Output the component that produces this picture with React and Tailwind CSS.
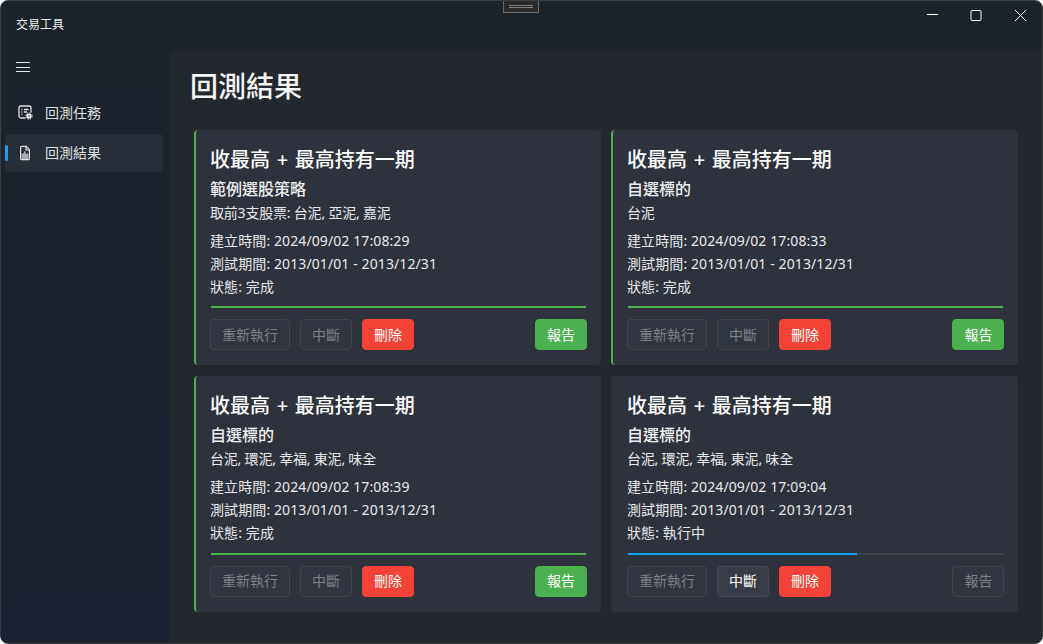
import { useState } from 'react';

const FONT = "font-['Noto_Sans','Noto_Sans_CJK_TC',sans-serif]";

const TASKS = [
  { stock: '範例選股策略', list: '取前3支股票: 台泥, 亞泥, 嘉泥', created: '2024/09/02 17:08:29', status: '完成', done: true },
  { stock: '自選標的', list: '台泥', created: '2024/09/02 17:08:33', status: '完成', done: true },
  { stock: '自選標的', list: '台泥, 環泥, 幸福, 東泥, 味全', created: '2024/09/02 17:08:39', status: '完成', done: true },
  { stock: '自選標的', list: '台泥, 環泥, 幸福, 東泥, 味全', created: '2024/09/02 17:09:04', status: '執行中', done: false, progress: 61 },
];

function TaskIcon() {
  return (
    <svg width="16" height="16" viewBox="0 0 16 16" fill="none" stroke="currentColor" strokeWidth="1.3">
      <path d="M7.5 13H3a2 2 0 0 1-2-2V3a2 2 0 0 1 2-2h8a2 2 0 0 1 2 2v4.5" />
      <path d="M3.5 4.5h1M6 4.5h4.5M3.5 7h1M6 7h3M3.5 9.5h1" />
      <circle cx="11" cy="11" r="2.6" fill="#ffffff" stroke="none" />
      <circle cx="11" cy="11" r="3.2" stroke="#ffffff" strokeWidth="1" strokeDasharray="1.3 1.2" />
      <circle cx="11" cy="11" r="0.8" fill="#1b232b" stroke="none" />
    </svg>
  );
}

function ResultIcon() {
  return (
    <svg width="16" height="16" viewBox="0 0 16 16" fill="none" stroke="currentColor" strokeWidth="1.2">
      <path d="M2.6 2.6A1.2 1.2 0 0 1 3.8 1.4h4.4l3.2 3.4v8.6a1.2 1.2 0 0 1-1.2 1.2H3.8a1.2 1.2 0 0 1-1.2-1.2Z" />
      <path d="M8 1.6v3.4h3.2" />
      <path d="M3.6 14V8.5h2.2V6.5h2v2.2h2.6V14Z" fill="currentColor" stroke="none" opacity="0.7" />
    </svg>
  );
}

function ActionButton({ label, kind = 'disabled', className = '' }) {
  const look = {
    disabled: 'border-[#3f444d] bg-[#31353f] text-[#7d8087]',
    normal: 'border-[#434852] bg-[#383c46] text-white',
    danger: 'border-[#f44336] bg-[#f44336] text-white',
    success: 'border-[#4caf50] bg-[#4caf50] text-white',
  }[kind];
  return (
    <button className={`h-[31px] rounded-[4px] border text-[14px] leading-none ${look} ${className}`}>
      {label}
    </button>
  );
}

function TaskCard({ task }) {
  return (
    <div className={`h-[235.2px] rounded-[4px] bg-[#2e323c] pl-[14px] pr-[13.6px] border-l-2 ${task.done ? 'border-[#4caf50]' : 'border-transparent'}`}>
      <div className="pt-[15px] text-[20px] leading-[30px] font-medium text-white [word-spacing:1.5px]">收最高 + 最高持有一期</div>
      <div className="mt-[2px] text-[16px] leading-[24px] font-medium text-[#f0f0f2]">{task.stock}</div>
      <div className="mt-[2px] text-[14px] leading-[20px] tracking-[-0.2px] text-[#e8e8ea]">{task.list}</div>
      <div className="mt-[6px] text-[14px] leading-[23px] tracking-[0.1px] text-[#e8e8ea]">
        <div>建立時間: {task.created}</div>
        <div>測試期間: 2013/01/01 - 2013/12/31</div>
        <div>狀態: {task.status}</div>
      </div>
      <div className="mt-[8.2px] ml-[1px] h-[2px] w-[375px] bg-[#3d414a]">
        <div className={`h-full ${task.done ? 'bg-[#4caf50]' : 'bg-[#0ea5f0]'}`} style={{ width: `${task.done ? 100 : task.progress}%` }} />
      </div>
      <div className="mt-[11px] flex items-center gap-[10px]">
        <ActionButton label="重新執行" className="w-[80px]" />
        <ActionButton label="中斷" kind={task.done ? 'disabled' : 'normal'} className="w-[52px]" />
        <ActionButton label="刪除" kind="danger" className="w-[52px]" />
        <ActionButton label="報告" kind={task.done ? 'success' : 'disabled'} className="w-[52px] ml-auto" />
      </div>
    </div>
  );
}

export default function App() {
  const [active] = useState('result');
  return (
    <div className={`relative flex h-[644px] w-[1043px] flex-col overflow-hidden rounded-lg border border-[#3a3d42] bg-linear-to-b from-[#1b232b] to-[#1a2130] text-white ${FONT}`}>
      {/* drag handle on top of the title bar */}
      <div className="absolute left-[502px] top-[-1px] flex h-[13px] w-[36px] flex-col items-center justify-center gap-px border border-[#6a6a6a] bg-[#2a2a2a]">
        <div className="h-px w-[24px] bg-[#808080]" />
        <div className="h-px w-[24px] bg-[#808080]" />
      </div>

      <header className="flex h-[48px] shrink-0 pl-[15px]">
        <span className="self-center text-[12px] text-[#eceded]">交易工具</span>
        <div className="ml-auto flex items-start pt-[8px] text-white">
          <button className="flex w-[44px] justify-center">
            <svg width="12" height="12" viewBox="0 0 12 12" stroke="currentColor"><path d="M1 5.5h11" /></svg>
          </button>
          <button className="flex w-[44px] justify-center">
            <svg width="12" height="12" viewBox="0 0 12 12" fill="none" stroke="currentColor"><rect x="1" y="1.5" width="10" height="10" rx="1" /></svg>
          </button>
          <button className="flex w-[44px] justify-center">
            <svg width="13" height="13" viewBox="0 0 13 13" stroke="currentColor"><path d="M1 1l11 11M12 1L1 12" /></svg>
          </button>
        </div>
      </header>

      <div className="flex min-h-0 flex-1">
        <aside className="flex w-[168px] shrink-0 flex-col pl-[4px] pr-[6px]">
          <button className="ml-[11px] mt-[13px] flex h-[10px] w-[14px] flex-col justify-between">
            <span className="h-px w-full bg-[#e6e7e8]" />
            <span className="h-px w-full bg-[#e6e7e8]" />
            <span className="h-px w-full bg-[#e6e7e8]" />
          </button>
          <div className="mt-[22px] flex h-[38px] items-center rounded-[4px] pl-[13px] text-[#dfe0e1]">
            <TaskIcon />
            <span className="mb-[2px] ml-[11px] text-[14px]">回測任務</span>
          </div>
          <div className={`relative mt-[2px] flex h-[38px] items-center rounded-[4px] pl-[13px] text-[#dfe0e1] ${active === 'result' ? 'bg-[#282e38]' : ''}`}>
            <span className="absolute left-0 top-[11px] h-[16px] w-[3px] rounded-full bg-[#1e9bf0]" />
            <ResultIcon />
            <span className="mb-[2px] ml-[11px] text-[14px]">回測結果</span>
          </div>
        </aside>

        <main className="flex-1 rounded-tl-lg bg-[#23272e] pl-[25px] pr-[24px]">
          <h1 className="ml-[-4px] pt-[15px] text-[28px] leading-[44px] font-medium text-[#f5f5f6]">回測結果</h1>
          <div className="mt-[22px] grid grid-cols-[406.5px_407px] gap-x-[10.5px] gap-y-[11.2px]">
            {TASKS.map((task) => (
              <TaskCard key={task.created} task={task} />
            ))}
          </div>
        </main>
      </div>
    </div>
  );
}
